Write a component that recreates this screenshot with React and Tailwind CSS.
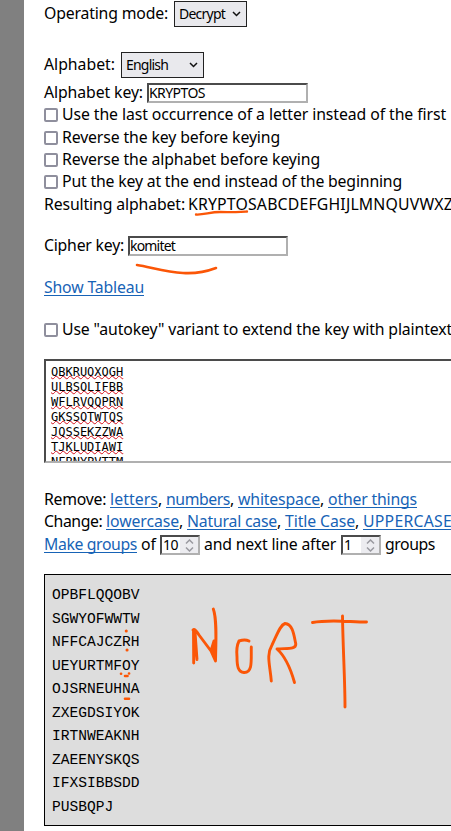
import { useLayoutEffect, useRef } from "react";

// Text run tracked so that it fills the width given by its class.
function Run({ w, children, link = false }) {
  const outer = useRef(null);
  const inner = useRef(null);
  useLayoutEffect(() => {
    const el = inner.current;
    el.style.letterSpacing = "0px";
    const natural = el.getBoundingClientRect().width;
    const target = outer.current.getBoundingClientRect().width;
    el.style.letterSpacing = `${(target - natural) / children.length}px`;
  }, [children]);
  return (
    <span ref={outer} className={`inline-block shrink-0 whitespace-pre ${w}`}>
      {link ? (
        <a
          ref={inner}
          className="inline-block text-[#1763b6] underline decoration-1 underline-offset-2 [text-decoration-skip-ink:none]"
        >
          {children}
        </a>
      ) : (
        <span ref={inner} className="inline-block">{children}</span>
      )}
    </span>
  );
}

function Row({ className = "", children }) {
  return <div className={`flex h-[22px] shrink-0 items-center ${className}`}>{children}</div>;
}

function Select({ className, w, children }) {
  return (
    <div
      className={`mt-[2px] flex h-[26px] shrink-0 items-center justify-between border border-[#222] bg-[#e9e9ed] pl-1 pr-[5px] text-[14px] ${className}`}
    >
      <Run w={w}>{children}</Run>
      <svg width="9" height="6" viewBox="0 0 9 6" fill="none" stroke="#111" strokeWidth="1.5">
        <path d="M1 1l3.5 3.5L8 1" />
      </svg>
    </div>
  );
}

const inset = "border-2 border-t-[#4b4b4b] border-l-[#4b4b4b] border-r-[#b0b0b0] border-b-[#b0b0b0] bg-white";

function Field({ className, w, children }) {
  return (
    <div className={`mt-[2px] flex h-5 shrink-0 items-center text-[14px] ${inset} ${className}`}>
      <Run w={w}>{children}</Run>
    </div>
  );
}

function Spin({ className, w, children }) {
  return (
    <div className={`mt-[2px] flex h-5 w-10 shrink-0 items-center justify-between pl-px text-[14px] ${inset} ${className}`}>
      <Run w={w}>{children}</Run>
      <span className="flex h-4 w-[18px] items-center justify-center bg-[#ececf0]">
        <svg width="9" height="13" viewBox="0 0 9 13" fill="none" stroke="#9a9aa0" strokeWidth="1.5">
          <path d="M1 4.5L4.5 1L8 4.5M1 8.5L4.5 12L8 8.5" />
        </svg>
      </span>
    </div>
  );
}

function Check({ className = "", w, children }) {
  return (
    <Row className={className}>
      <span className="mr-1 mt-[2px] h-[14px] w-[14px] shrink-0 rounded-[2px] border-2 border-[#8f8f9d] bg-white" />
      <Run w={w}>{children}</Run>
    </Row>
  );
}

const input = ["OBKRUOXOGH", "ULBSOLIFBB", "WFLRVQQPRN", "GKSSOTWTQS", "JQSSEKZZWA", "TJKLUDIAWI", "NFBNYPVTTM"];
const output = [
  "OPBFLQQOBV",
  "SGWYOFWWTW",
  "NFFCAJCZRH",
  "UEYURTMFOY",
  "OJSRNEUHNA",
  "ZXEGDSIYOK",
  "IRTNWEAKNH",
  "ZAEENYSKQS",
  "IFXSIBBSDD",
  "PUSBQPJ",
];

function Scribbles() {
  return (
    <svg
      className="pointer-events-none absolute left-0 top-0"
      width="451"
      height="831"
      viewBox="0 0 451 831"
      fill="none"
      stroke="#fb5607"
      strokeWidth="2.9"
      strokeLinecap="round"
      strokeLinejoin="round"
    >
      <path strokeWidth="2.3" d="M196 214.5C204 215 210 212 220 212C230 212.5 238 212 247 211.5" />
      <path strokeWidth="2.6" d="M137 265C150 267 166 272 183 273C198 274 208 271 216 268" />
      <path d="M193.7 663L193.5 630L197 659.5L195 632M193 630Q195 628 199 635L211 651L214 641L213 655M213.3 609C217 619 216 640 215.5 661L211 651" />
      <path d="M249 641Q245 639 239 641Q236 647 237 657C237 666 238 672 244 672.5C253 673 251 660 251.3 647" />
      <path d="M271.3 681C270 665 266 655 272 645C277 635 280 625 285 623.5C293 624 294 636 295.8 644C296 650 286 648 277 649C286 657 291 670 294.5 682.5" />
      <path d="M312.5 622.5C330 619 350 622 366.5 622M342.5 616C343 650 345 680 345 707" />
      <path strokeWidth="3" d="M126.2 631h.1M127 650h.1" />
      <path strokeWidth="2.6" d="M121 673.7h.1M129 673.5h.1M125 676L127.5 676M125 698.7h4" />
    </svg>
  );
}

export default function App() {
  return (
    <div className="relative flex h-[831px] w-[451px] overflow-hidden bg-white text-black">
      <div className="w-6 shrink-0 bg-[#808080]" />
      <main className="flex w-[427px] flex-col overflow-hidden pl-5 pt-[2px] font-['Noto_Sans','Open_Sans',sans-serif] text-[15.8px] leading-[22px]">
        <Row>
          <Run w="w-[124px]">Operating mode:</Run>
          <Select className="ml-[6px] w-[73px]" w="w-[46px]">Decrypt</Select>
        </Row>
        <Row className="mt-[29px]">
          <Run w="w-[71px]">Alphabet:</Run>
          <Select className="ml-[6px] w-[83px]" w="w-[42px]">English</Select>
        </Row>
        <Row className="mt-[6px]">
          <Run w="w-[99px]">Alphabet key:</Run>
          <Field className="ml-1 w-[161px]" w="w-[56px]">KRYPTOS</Field>
        </Row>
        <Check w="w-[384px]">Use the last occurrence of a letter instead of the first</Check>
        <Check className="mt-px" w="w-[218px]">Reverse the key before keying</Check>
        <Check w="w-[258px]">Reverse the alphabet before keying</Check>
        <Check w="w-[340px]">Put the key at the end instead of the beginning</Check>
        <Row className="mt-px">
          <Run w="w-[141px]">Resulting alphabet:</Run>
          <span className="w-[3px] shrink-0" />
          <Run w="w-[265px]">KRYPTOSABCDEFGHIJLMNQUVWXZ</Run>
        </Row>
        <Row className="mt-[19px]">
          <Run w="w-[80px]">Cipher key:</Run>
          <Field className="ml-1 w-40" w="w-[45px]">komitet</Field>
        </Row>
        <Row className="mt-5">
          <Run link w="w-[100px]">Show Tableau</Run>
        </Row>
        <Check className="mt-5" w="w-[390px]">Use "autokey" variant to extend the key with plaintext</Check>
        <div
          className={`mt-[19px] h-[104px] w-[420px] shrink-0 overflow-hidden pl-[5px] pt-1 font-['DejaVu_Sans_Mono',monospace] text-[12px] leading-[15px] ${inset}`}
        >
          {input.map((line) => (
            <div key={line}>
              <span className="underline decoration-[#d3101c] decoration-wavy decoration-1 underline-offset-[-1px] [text-decoration-skip-ink:none]">
                {line}
              </span>
            </div>
          ))}
        </div>
        <Row className="mt-[25px]">
          <Run w="w-[66px]">Remove: </Run>
          <Run link w="w-[48px]">letters</Run>
          <Run w="w-[8px]">, </Run>
          <Run link w="w-[64px]">numbers</Run>
          <Run w="w-[8px]">, </Run>
          <Run link w="w-[82px]">whitespace</Run>
          <Run w="w-[8px]">, </Run>
          <Run link w="w-[89px]">other things</Run>
        </Row>
        <Row>
          <Run w="w-[62px]">Change: </Run>
          <Run link w="w-[73px]">lowercase</Run>
          <Run w="w-[8px]">, </Run>
          <Run link w="w-[90px]">Natural case</Run>
          <Run w="w-[8px]">, </Run>
          <Run link w="w-[70px]">Title Case</Run>
          <Run w="w-[8px]">, </Run>
          <Run link w="w-[89px]">UPPERCASE</Run>
        </Row>
        <Row className="mt-px">
          <Run link w="w-[93px]">Make groups</Run>
          <span className="w-1 shrink-0" />
          <Run w="w-[15px]">of</Run>
          <Spin className="ml-1" w="w-[15px]">10</Spin>
          <span className="w-1 shrink-0" />
          <Run w="w-[132px]">and next line after</Run>
          <Spin className="ml-[5px]" w="w-[7px]">1</Spin>
          <span className="w-1 shrink-0" />
          <Run w="w-[50px]">groups</Run>
        </Row>
        <div className="mt-[19px] h-[252px] w-[420px] shrink-0 border border-black bg-[#ddd] pl-[7px] pt-[9px] font-['Liberation_Mono',monospace] text-[14.6px] leading-[23.5px]">
          {output.map((line) => (
            <div key={line}>{line}</div>
          ))}
        </div>
      </main>
      <Scribbles />
    </div>
  );
}
